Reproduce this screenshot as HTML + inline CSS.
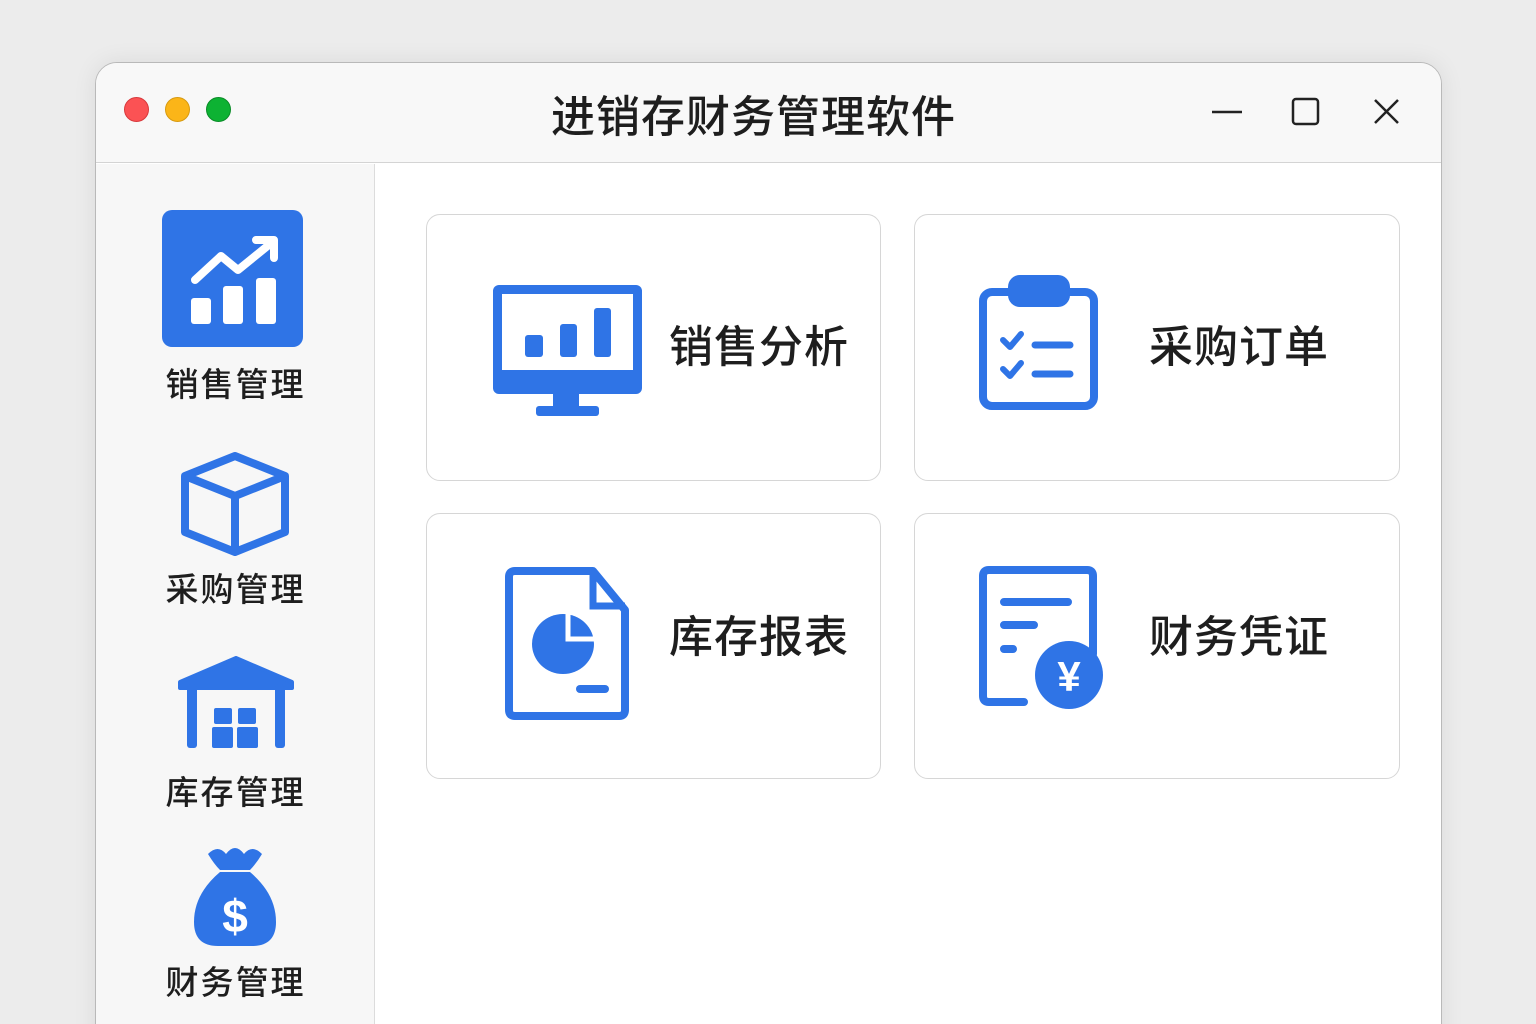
<!DOCTYPE html>
<html><head><meta charset="utf-8"><style>
*{margin:0;padding:0;box-sizing:border-box}
html,body{width:1536px;height:1024px;overflow:hidden}
body{background:#ececec;position:relative;font-family:"Liberation Sans","Noto Sans CJK SC",sans-serif}
.win{position:absolute;left:95px;top:62px;width:1347px;height:1000px;background:#fff;border:1.5px solid #b9b9b9;border-radius:22px 22px 0 0;overflow:hidden;box-shadow:0 0 24px rgba(0,0,0,.08)}
.title{position:absolute;left:0;top:0;right:0;height:100px;background:#f8f8f8;border-bottom:1.5px solid #d4d4d4}
.dot{position:absolute;top:34px;width:25px;height:25px;border-radius:50%}
.ttl{position:absolute;left:0;right:0;top:18px;text-align:center;font-size:44px;color:#1e1e1e;letter-spacing:1px;font-weight:500;padding-right:30px}
.side{position:absolute;left:0;top:101px;width:279px;bottom:0;background:#f7f7f7;border-right:1.5px solid #dcdcdc}
.lab{position:absolute;left:0;width:279px;text-align:center;font-size:33px;color:#1e1e1e;letter-spacing:2px;font-weight:500}
.card{position:absolute;background:#fff;border:1.5px solid #d6d6d6;border-radius:14px}
.ct{position:absolute;font-size:44px;color:#1e1e1e;letter-spacing:1px;font-weight:500}
svg{position:absolute}
</style></head><body>
<div class="win">
 <div class="title">
  <div class="dot" style="left:28px;background:#fb5254;border:1px solid #d8393c"></div>
  <div class="dot" style="left:69px;background:#fbb518;border:1px solid #d79a10"></div>
  <div class="dot" style="left:110px;background:#0db233;border:1px solid #0a8c27"></div>
  <div class="ttl">进销存财务管理软件</div>
  <svg style="left:1110px;top:28px" width="220" height="44" viewBox="0 0 220 44">
   <line x1="6" y1="21" x2="36" y2="21" stroke="#222" stroke-width="2.5"/>
   <rect x="87" y="8" width="25" height="25" rx="3" fill="none" stroke="#222" stroke-width="2.5"/>
   <path d="M169 9 L192 32 M192 9 L169 32" stroke="#222" stroke-width="2.5"/>
  </svg>
 </div>
 <div class="side">
  <svg style="left:66px;top:46px" width="142" height="138" viewBox="0 0 142 138">
   <rect x="0" y="0" width="141" height="137" rx="10" fill="#2f74e6"/>
   <rect x="29" y="88" width="20" height="26" rx="3" fill="#fff"/>
   <rect x="61" y="76" width="20" height="38" rx="3" fill="#fff"/>
   <rect x="94" y="68" width="20" height="46" rx="3" fill="#fff"/>
   <path d="M33 70 L59 46 L76 60 L108 34" stroke="#fff" stroke-width="8" fill="none" stroke-linecap="round" stroke-linejoin="round"/>
   <path d="M94 30 L112 30 L112 48" stroke="#fff" stroke-width="8" fill="none" stroke-linecap="round" stroke-linejoin="round"/>
  </svg>
  <div class="lab" style="top:194px">销售管理</div>
  <svg style="left:84px;top:288px" width="110" height="104" viewBox="0 0 110 104">
   <path d="M55 4 L105 24 L105 80 L55 100 L5 80 L5 24 Z M5 24 L55 44 L105 24 M55 44 L55 100" fill="none" stroke="#2f74e6" stroke-width="8" stroke-linejoin="round"/>
  </svg>
  <div class="lab" style="top:399px">采购管理</div>
  <svg style="left:80px;top:492px" width="120" height="96" viewBox="0 0 120 96">
   <path d="M4 26 L60 2 L116 26 L116 32 L4 32 Z" fill="#2f74e6" stroke="#2f74e6" stroke-width="4" stroke-linejoin="round"/>
   <rect x="11" y="28" width="10" height="64" rx="3" fill="#2f74e6"/>
   <rect x="99" y="28" width="10" height="64" rx="3" fill="#2f74e6"/>
   <rect x="38" y="52" width="18" height="16" rx="2" fill="#2f74e6"/>
   <rect x="62" y="52" width="18" height="16" rx="2" fill="#2f74e6"/>
   <rect x="36" y="71" width="21" height="21" rx="2" fill="#2f74e6"/>
   <rect x="61" y="71" width="21" height="21" rx="2" fill="#2f74e6"/>
  </svg>
  <div class="lab" style="top:602px">库存管理</div>
  <svg style="left:94px;top:682px" width="90" height="104" viewBox="0 0 90 104">
   <path d="M18 8 Q28 -2 36 8 Q45 -4 54 8 Q62 -2 72 8 Q66 18 60 24 L30 24 Q24 18 18 8 Z" fill="#2f74e6"/>
   <path d="M30 26 L60 26 Q86 48 86 76 Q86 100 62 100 L28 100 Q4 100 4 76 Q4 48 30 26 Z" fill="#2f74e6"/>
   <text x="45" y="86" text-anchor="middle" font-family="Liberation Sans" font-weight="bold" font-size="46" fill="#fff">$</text>
  </svg>
  <div class="lab" style="top:792px">财务管理</div>
 </div>
 <div class="card" style="left:330px;top:151px;width:455px;height:267px">
  <svg style="left:66px;top:70px" width="150" height="134" viewBox="0 0 150 134">
   <rect x="0" y="0" width="149" height="109" rx="6" fill="#2f74e6"/>
   <rect x="9" y="9" width="131" height="76" fill="#fff"/>
   <rect x="32" y="50" width="18" height="22" rx="3" fill="#2f74e6"/>
   <rect x="67" y="39" width="17" height="33" rx="3" fill="#2f74e6"/>
   <rect x="101" y="23" width="17" height="49" rx="3" fill="#2f74e6"/>
   <rect x="60" y="108" width="26" height="16" fill="#2f74e6"/>
   <rect x="43" y="121" width="63" height="10" rx="3" fill="#2f74e6"/>
  </svg>
  <div class="ct" style="left:242px;top:96px">销售分析</div>
 </div>
 <div class="card" style="left:818px;top:151px;width:486px;height:267px">
  <svg style="left:64px;top:60px" width="122" height="136" viewBox="0 0 122 136">
   <rect x="4" y="17" width="111" height="114" rx="9" fill="none" stroke="#2f74e6" stroke-width="8"/>
   <rect x="29" y="0" width="62" height="32" rx="12" fill="#2f74e6"/>
   <path d="M24 65 L31 72 L42 59 M24 94 L31 101 L42 88" stroke="#2f74e6" stroke-width="6" fill="none" stroke-linecap="round" stroke-linejoin="round"/>
   <path d="M56 70 L91 70 M56 99 L91 99" stroke="#2f74e6" stroke-width="7" stroke-linecap="round"/>
  </svg>
  <div class="ct" style="left:234px;top:96px">采购订单</div>
 </div>
 <div class="card" style="left:330px;top:450px;width:455px;height:266px">
  <svg style="left:78px;top:52px" width="130" height="154" viewBox="0 0 130 154">
   <path d="M10 5 L88 5 L120 44 L120 144 Q120 150 114 150 L10 150 Q4 150 4 144 L4 11 Q4 5 10 5 Z" fill="none" stroke="#2f74e6" stroke-width="8" stroke-linejoin="round"/>
   <path d="M88 5 L88 40 L120 40" fill="none" stroke="#2f74e6" stroke-width="7"/>
   <ellipse cx="58" cy="78" rx="31" ry="30" fill="#2f74e6"/>
   <path d="M63 44 L63 73 L92 73" fill="none" stroke="#fff" stroke-width="5"/>
   <rect x="71" y="119" width="33" height="8" rx="4" fill="#2f74e6"/>
  </svg>
  <div class="ct" style="left:242px;top:87px">库存报表</div>
 </div>
 <div class="card" style="left:818px;top:450px;width:486px;height:266px">
  <svg style="left:64px;top:50px" width="130" height="150" viewBox="0 0 130 150">
   <path d="M45 138 L10 138 Q4 138 4 132 L4 12 Q4 6 10 6 L108 6 Q114 6 114 12 L114 90" fill="none" stroke="#2f74e6" stroke-width="8" stroke-linecap="round"/>
   <path d="M25 38 L89 38 M25 61 L55 61 M25 85 L34 85" stroke="#2f74e6" stroke-width="8" stroke-linecap="round"/>
   <ellipse cx="90" cy="111" rx="34" ry="34" fill="#2f74e6"/>
   <text x="90" y="127" text-anchor="middle" font-family="Liberation Sans" font-weight="bold" font-size="42" fill="#fff">¥</text>
  </svg>
  <div class="ct" style="left:234px;top:87px">财务凭证</div>
 </div>
</div>
</body></html>
